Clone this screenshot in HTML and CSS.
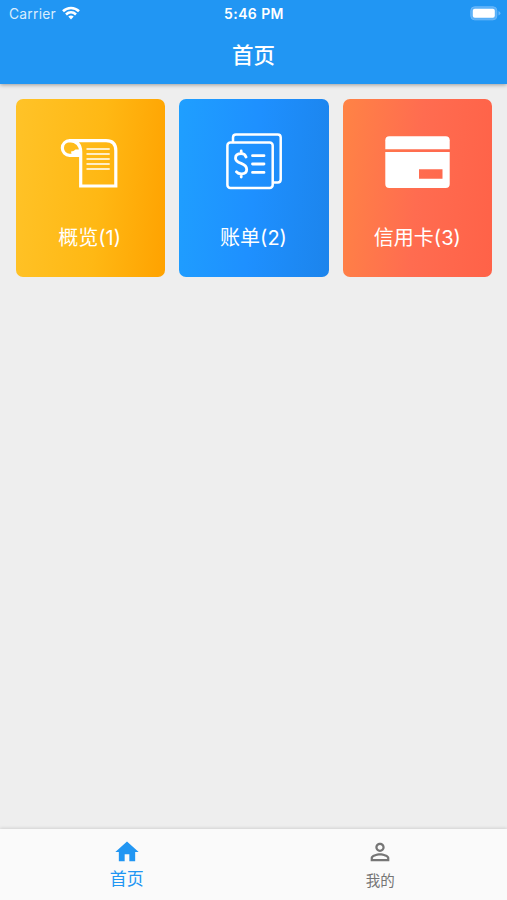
FILE: index.html
```html
<!DOCTYPE html>
<html lang="zh-CN">
<head>
<meta charset="utf-8">
<meta name="viewport" content="width=device-width">
<title>首页</title>
<link rel="stylesheet" href="styles.css">
</head>
<body>
<div class="app">
  <header class="header">
    <div class="status">
      <div class="status-left">
        <span class="carrier">Carrier</span>
        <svg class="wifi" viewBox="0 0 18 14" fill="none" stroke="#fff" stroke-width="2.6">
          <path d="M1 5.3C5.6 .9 12.4 .9 17 5.3M4 8.5C7 5.7 11 5.7 14 8.5"/>
          <path d="M9 13.4L6.3 10.6Q9 8.6 11.7 10.6Z" fill="#fff" stroke="none"/>
        </svg>
      </div>
      <span class="time">5:46 PM</span>
      <svg class="battery" viewBox="0 0 31 15">
        <rect x=".8" y=".8" width="26" height="13" rx="3.8" fill="#59b0f8" stroke="#6bb8f9"/>
        <rect x="2.8" y="2.8" width="22" height="9" rx="2" fill="#fff"/>
        <path d="M28.5 5v4.6q1.900-.8 1.900-2.300T28.500 5Z" fill="#6bb8f9"/>
      </svg>
    </div>
    <h1 class="title">首页</h1>
  </header>

  <main class="cards">
    <section class="card overview">
      <svg class="card-icon" viewBox="50 121 80 80" fill="none" stroke="#fff">
        <path d="M69 140.600H106Q115.800 140.600 115.800 150.500V186H80.700V152Q80.700 141 69.500 140.600A7 7.200 0 0 0 69.500 155.300H80" stroke-width="3.200"/>
        <path d="M81 149.500H75.500L73.500 151L71 151.500L71.500 154L69 155H81Z" fill="#fff" stroke="none"/>
        <path d="M86.500 149H109.700M86.500 154H109.700M86.500 159H109.700M86.500 164H109.700M86.500 169H109.700" stroke-width="1.700"/>
      </svg>
      <span class="label">概览(1)</span>
    </section>
    <section class="card bills">
      <svg class="card-icon" viewBox="214 121 80 80" fill="none" stroke="#fff" stroke-width="2.500" stroke-linecap="round" stroke-linejoin="round">
        <rect x="227.400" y="142.600" width="45.300" height="45.400" rx="3"/>
        <path d="M233 142V137.600Q233 134.600 236 134.600H277.700Q280.700 134.600 280.700 137.600V179.500Q280.700 182.500 277.700 182.500H273.500"/>
        <path d="M246 157Q245 153.700 241.200 153.700Q235.500 153.700 235.500 158.200Q235.500 161.500 241.200 163.400Q246.700 165.500 246.700 169.500Q246.700 173.800 241.500 173.800Q238 173.800 236.500 171.800M241.200 151V153.500M241.200 174V177M252.500 155.700H264M252.500 164H264M252.500 172.400H264" stroke-width="2.800"/>
      </svg>
      <span class="label">账单(2)</span>
    </section>
    <section class="card credit">
      <svg class="card-icon" viewBox="378 121 80 80" fill="#fff">
        <path d="M385.300 149.300V140.300Q385.300 136.300 389.300 136.300H445.700Q449.700 136.300 449.700 140.300V149.300Z"/>
        <path fill-rule="evenodd" d="M385.300 152H449.700V184Q449.700 188 445.700 188H389.300Q385.300 188 385.300 184ZM419 169.300V178.700H442.500V169.300Z"/>
      </svg>
      <span class="label">信用卡(3)</span>
    </section>
  </main>

  <nav class="tabs">
    <a class="tab active">
      <svg class="tab-icon" viewBox="0 0 24 24" fill="currentColor"><path d="M10 20v-6h4v6h5v-8h3L12 3 2 12h3v8z"/></svg>
      <span>首页</span>
    </a>
    <a class="tab">
      <svg class="tab-icon" viewBox="0 0 24 24" fill="currentColor"><path d="M12 5.900c1.160 0 2.100.94 2.100 2.100s-.94 2.100-2.100 2.100S9.900 9.160 9.900 8s.94-2.100 2.100-2.100m0 9c2.970 0 6.100 1.460 6.100 2.100v1.100H5.900V17c0-.64 3.130-2.100 6.100-2.100M12 4C9.790 4 8 5.790 8 8s1.790 4 4 4 4-1.790 4-4-1.790-4-4-4zm0 9c-2.670 0-8 1.340-8 4v3h16v-3c0-2.660-5.330-4-8-4z"/></svg>
      <span>我的</span>
    </a>
  </nav>
</div>
</body>
</html>
```
FILE: styles.css
```css
* {
  box-sizing: border-box;
}

body {
  margin: 0;
  font-family: Inter, "Noto Sans CJK SC", sans-serif;
}

.app {
  display: flex;
  flex-direction: column;
  height: 900px;
  background: #eeeeee;
}

.header {
  height: 84px;
  background: #2196f3;
  color: #fff;
  box-shadow: 0 1px 4px rgba(0, 0, 0, 0.35);
}

.status {
  display: grid;
  grid-template-columns: 1fr auto 1fr;
  align-items: center;
  height: 27px;
  padding: 0 6px 0 9px;
}

.status-left {
  display: flex;
  align-items: center;
  gap: 6px;
}

.carrier {
  font-size: 13.8px;
  letter-spacing: 0.25px;
  color: #d9edfd;
}

.wifi {
  width: 18px;
  height: 14px;
  margin-top: -1px;
}

.time {
  margin-right: 2px;
  font-size: 14px;
  font-weight: 600;
  letter-spacing: 0.4px;
}

.battery {
  width: 31px;
  height: 15px;
  justify-self: end;
}

.title {
  margin: 0;
  font-size: 21.5px;
  font-weight: 500;
  line-height: 56px;
  text-align: center;
}

.cards {
  flex: 1;
  display: grid;
  grid-template-columns: repeat(3, 1fr);
  align-items: start;
  gap: 14.5px;
  padding: 14.5px 14.5px 0 15.5px;
}

.card {
  display: flex;
  flex-direction: column;
  align-items: center;
  height: 178.5px;
  padding-top: 22.5px;
  border-radius: 7px;
  color: #fff;
}

.overview {
  background: linear-gradient(95deg, #ffc328, #ffb814 55%, #ffa200);
}

.bills {
  background: linear-gradient(95deg, #1f9fff, #1e90ff 50%, #1c84ec);
}

.credit {
  background: linear-gradient(95deg, #ff8345, #ff6c50 50%, #ff6248);
}

.card-icon {
  width: 80px;
  height: 80px;
}

.label {
  margin: 22px 1px 0 0;
  font-size: 20px;
  line-height: 30px;
}

.tabs {
  display: flex;
  height: 71px;
  background: #fafafa;
  box-shadow: 0 -1px 3px rgba(0, 0, 0, 0.12);
}

.tab {
  flex: 1;
  display: flex;
  flex-direction: column;
  align-items: center;
  padding-top: 9px;
  font-size: 14.5px;
  line-height: 30px;
  color: #757575;
}

.active {
  font-size: 17px;
  line-height: 27px;
  color: #2196f3;
}

.tab-icon {
  width: 28px;
  height: 28px;
}
```
